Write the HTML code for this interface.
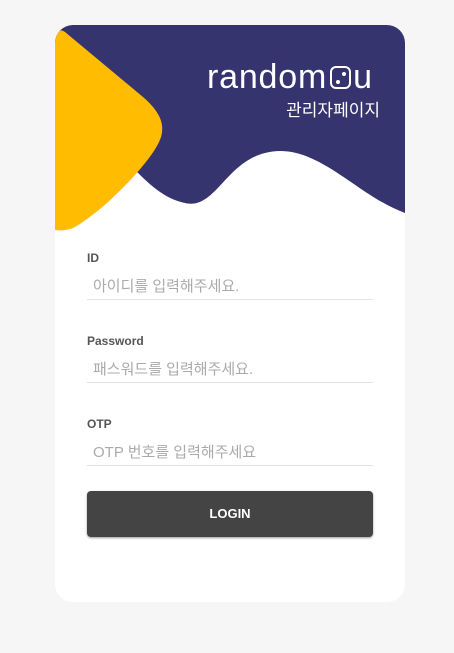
<!DOCTYPE html>
<html><head><meta charset="utf-8"><style>
html,body{margin:0;padding:0;background:#f6f6f6;width:454px;height:653px;overflow:hidden;font-family:"Liberation Sans","Noto Sans CJK KR",sans-serif}
.card{position:absolute;left:55px;top:25px;width:350px;height:577px;background:#fff;border-radius:18px;overflow:hidden}
svg.bg{position:absolute;left:0;top:0}
.logo{position:absolute;left:152px;top:32px;color:#fff;font-size:34px;letter-spacing:0.8px;line-height:40px}
.sub{position:absolute;right:25px;top:74px;color:#fff;font-size:17px;line-height:24px}
.lbl{position:absolute;left:32px;font-size:12px;font-weight:bold;color:#555}
.ph{position:absolute;left:38px;font-size:15px;color:#aaa}
.ln{position:absolute;left:32px;width:286px;height:1px;background:#e2e2e2}
.btn{position:absolute;left:32px;top:466px;width:286px;height:46px;background:#444;border-radius:4px;box-shadow:0 1px 2px rgba(0,0,0,.4);color:#fff;font-weight:bold;font-size:13px;text-align:center;line-height:46px}
</style></head><body>
<div class="card">
<svg class="bg" width="350" height="220" viewBox="0 0 350 220">
<path d="M0 0 H350 V188 C300 170 260 115 210 128 C170 138 160 185 130 178 C110 174 95 160 80 145 L0 150 Z" fill="#36346f"/>
<path d="M0 10 C2 5 6 4 10 7 L88 72 C104 86 110 98 106 112 C102 124 92 136 80 150 C60 172 40 190 20 202 C14 205 8 206 0 205 Z" fill="#ffbc00"/>
</svg>
<div class="logo">random<span style="display:inline-block;width:21px;height:23px;border:2.5px solid #fff;border-radius:6px;box-sizing:border-box;position:relative;vertical-align:-1px;margin:0 2px 0 3px"><i style="position:absolute;right:3px;top:4px;width:4px;height:4px;background:#fff;border-radius:50%"></i><i style="position:absolute;left:4px;bottom:3px;width:4px;height:4px;background:#fff;border-radius:50%"></i></span>u</div>
<div class="sub">관리자페이지</div>
<div class="lbl" style="top:226px">ID</div>
<div class="ph" style="top:250px">아이디를 입력해주세요.</div>
<div class="ln" style="top:274px"></div>
<div class="lbl" style="top:309px">Password</div>
<div class="ph" style="top:333px">패스워드를 입력해주세요.</div>
<div class="ln" style="top:357px"></div>
<div class="lbl" style="top:392px">OTP</div>
<div class="ph" style="top:416px">OTP 번호를 입력해주세요</div>
<div class="ln" style="top:440px"></div>
<div class="btn">LOGIN</div>
</div>
</body></html>
